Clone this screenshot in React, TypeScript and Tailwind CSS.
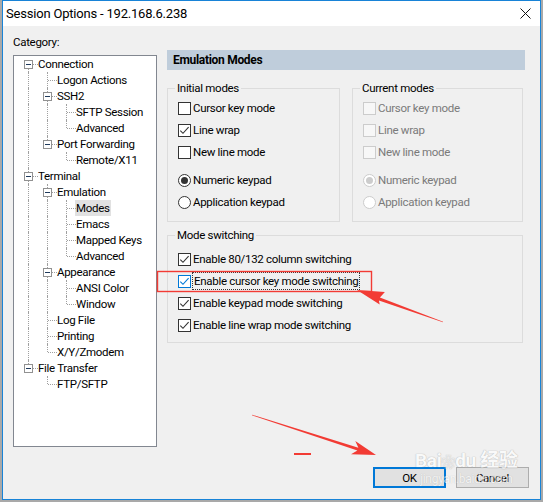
import React from 'react';

const UI = "font-['Roboto','Liberation_Sans',sans-serif]";

type TreeRow = {
  text: string;
  depth: number;
  guides: boolean[];
  last: boolean;
  first?: boolean;
  exp?: boolean;
  selected?: boolean;
};

const tree: TreeRow[] = [
  { text: 'Connection', depth: 0, guides: [], last: false, first: true, exp: true },
  { text: 'Logon Actions', depth: 1, guides: [true], last: false },
  { text: 'SSH2', depth: 1, guides: [true], last: false, exp: true },
  { text: 'SFTP Session', depth: 2, guides: [true, true], last: false },
  { text: 'Advanced', depth: 2, guides: [true, true], last: true },
  { text: 'Port Forwarding', depth: 1, guides: [true], last: true, exp: true },
  { text: 'Remote/X11', depth: 2, guides: [true, false], last: true },
  { text: 'Terminal', depth: 0, guides: [], last: false, exp: true },
  { text: 'Emulation', depth: 1, guides: [true], last: false, exp: true },
  { text: 'Modes', depth: 2, guides: [true, true], last: false, selected: true },
  { text: 'Emacs', depth: 2, guides: [true, true], last: false },
  { text: 'Mapped Keys', depth: 2, guides: [true, true], last: false },
  { text: 'Advanced', depth: 2, guides: [true, true], last: true },
  { text: 'Appearance', depth: 1, guides: [true], last: false, exp: true },
  { text: 'ANSI Color', depth: 2, guides: [true, true], last: false },
  { text: 'Window', depth: 2, guides: [true, true], last: true },
  { text: 'Log File', depth: 1, guides: [true], last: false },
  { text: 'Printing', depth: 1, guides: [true], last: false },
  { text: 'X/Y/Zmodem', depth: 1, guides: [true], last: true },
  { text: 'File Transfer', depth: 0, guides: [], last: true, exp: true },
  { text: 'FTP/SFTP', depth: 1, guides: [false], last: true },
];

const dot = 'border-dotted border-[#a0a0a0]';

function GuideCell({ on }: { on: boolean }) {
  return (
    <span className="relative w-[19px] h-[16px] shrink-0">
      {on && <span className={`absolute left-[9px] top-0 bottom-0 border-l ${dot}`} />}
    </span>
  );
}

function NodeCell({ row }: { row: TreeRow }) {
  return (
    <span className="relative w-[19px] h-[16px] shrink-0">
      <span
        className={`absolute left-[9px] border-l ${dot} ${row.first ? 'top-[8px]' : 'top-0'} ${
          row.last ? 'h-[8px]' : 'bottom-0'
        }`}
      />
      <span className={`absolute left-[10px] right-0 top-[8px] border-t ${dot}`} />
      {row.exp && (
        <span className="absolute left-[5px] top-[4px] w-[9px] h-[9px] border border-[#919191] bg-white flex items-center justify-center">
          <span className="w-[5px] h-px bg-[#1f3a5c]" />
        </span>
      )}
    </span>
  );
}

function Tree() {
  return (
    <div className="w-[144px] h-[392px] border border-[#828790] bg-white pl-[5px] leading-[16px] text-black">
      {tree.map((r, i) => (
        <div key={i} className="flex h-[16px] items-center">
          {r.guides.map((g, j) => (
            <GuideCell key={j} on={g} />
          ))}
          <NodeCell row={r} />
          <span className={`whitespace-nowrap px-[1px] -ml-[1px] ${r.selected ? 'bg-[#e1e1e1]' : ''}`}>{r.text}</span>
        </div>
      ))}
    </div>
  );
}

function Check({ checked, disabled, focus }: { checked?: boolean; disabled?: boolean; focus?: boolean }) {
  const border = disabled ? 'border-[#cccccc]' : focus ? 'border-[#0078d7]' : 'border-[#333333]';
  const stroke = focus ? '#0078d7' : '#333333';
  return (
    <span className={`w-[13px] h-[13px] border ${border} ${disabled ? 'bg-[#f7f7f7]' : 'bg-white'} flex items-center justify-center shrink-0`}>
      {checked && (
        <svg width="11" height="11" viewBox="0 0 11 11">
          <path d="M1.3 5.6 L4 8.3 L9.6 2.2" fill="none" stroke={stroke} strokeWidth="1.1" />
        </svg>
      )}
    </span>
  );
}

function Radio({ on, disabled }: { on?: boolean; disabled?: boolean }) {
  return (
    <span
      className={`w-[13px] h-[13px] rounded-full border ${disabled ? 'border-[#cccccc]' : 'border-[#333333]'} bg-white flex items-center justify-center shrink-0`}
    >
      {on && <span className={`w-[7px] h-[7px] rounded-full ${disabled ? 'bg-[#cccccc]' : 'bg-[#333333]'}`} />}
    </span>
  );
}

function Item({ children, label, disabled, focus }: { children: React.ReactNode; label: string; disabled?: boolean; focus?: boolean }) {
  return (
    <div className="flex items-center h-[22px] gap-[1px]">
      {children}
      <span
        className={`whitespace-nowrap px-[1px] leading-[16px] ${disabled ? 'text-[#7a7a7a]' : 'text-black'} ${
          focus ? 'border border-dotted border-[#333]' : ''
        }`}
      >
        {label}
      </span>
    </div>
  );
}

function Group({ title, className, children }: { title: string; className: string; children: React.ReactNode }) {
  return (
    <div className={`relative border border-[#dcdcdc] pl-[10px] ${className}`}>
      <span className="absolute left-[7px] -top-[9px] bg-[#f0f0f0] px-[2px] leading-[16px]">{title}</span>
      {children}
    </div>
  );
}

export default function App() {
  return (
    <div className={`relative w-[543px] h-[502px] bg-[#a9a9a9] pl-[2px] ${UI} text-[11.5px] tracking-[-0.3px] text-black overflow-hidden`}>
      <div className="w-[539px] h-[500px] border border-[#1883d7] flex flex-col bg-[#f0f0f0]">
        {/* title bar */}
        <div className="h-[25px] bg-white flex items-center justify-between pl-[3px] pr-[9px] shrink-0">
          <span className="text-[13px] leading-[20px] tracking-[-0.2px]">Session Options - 192.168.6.238</span>
          <svg width="11" height="11" viewBox="0 0 11 11">
            <path d="M0.5 0.5 L10.5 10.5 M10.5 0.5 L0.5 10.5" stroke="#111" strokeWidth="1" />
          </svg>
        </div>

        {/* body */}
        <div className="relative flex-1 flex pl-[10px]">
          <div className="flex flex-col pt-[8px]">
            <span className="leading-[16px]">Category:</span>
            <div className="mt-[5px]">
              <Tree />
            </div>
          </div>

          <div className="ml-[10px] mt-[24px] w-[358px] flex flex-col">
            <div className="h-[20px] bg-[#bfcddb] flex items-center pl-[6px] font-bold text-[12px]">Emulation Modes</div>

            <div className="flex gap-[12px] mt-[18px]">
              <Group title="Initial modes" className="w-[173px] h-[134px] pt-[8px]">
                <Item label="Cursor key mode"><Check /></Item>
                <Item label="Line wrap"><Check checked /></Item>
                <Item label="New line mode"><Check /></Item>
                <div className="h-[6px]" />
                <Item label="Numeric keypad"><Radio on /></Item>
                <Item label="Application keypad"><Radio /></Item>
              </Group>
              <Group title="Current modes" className="w-[171px] h-[134px] pt-[8px]">
                <Item label="Cursor key mode" disabled><Check disabled /></Item>
                <Item label="Line wrap" disabled><Check disabled /></Item>
                <Item label="New line mode" disabled><Check disabled /></Item>
                <div className="h-[6px]" />
                <Item label="Numeric keypad" disabled><Radio on disabled /></Item>
                <Item label="Application keypad" disabled><Radio disabled /></Item>
              </Group>
            </div>

            <Group title="Mode switching" className="w-[356px] h-[108px] mt-[13px] pt-[12px]">
              <Item label="Enable 80/132 column switching"><Check checked /></Item>
              <Item label="Enable cursor key mode switching" focus><Check checked focus /></Item>
              <Item label="Enable keypad mode switching"><Check checked /></Item>
              <Item label="Enable line wrap mode switching"><Check checked /></Item>
            </Group>
          </div>

          {/* buttons */}
          <div className="absolute right-[11px] bottom-[11px] flex gap-[10px]">
            <button className="w-[73px] h-[21px] border-2 border-[#0078d7] bg-[#e1e1e1] leading-[16px]">OK</button>
            <button className="w-[73px] h-[21px] border border-[#adadad] bg-[#e1e1e1] leading-[16px]">Cancel</button>
          </div>

          {/* watermark */}
          <div className="absolute left-[412px] top-[425px] flex flex-col items-center pointer-events-none opacity-60">
            <span className="text-[19px] font-bold leading-[20px] text-white [text-shadow:0_0_1px_#9a9a9a,0_0_1px_#9a9a9a] font-['Roboto','Noto_Sans_CJK_SC',sans-serif]">
              Bai<span className="text-[14px]">❀</span>du 经验
            </span>
            <span className="text-[12px] leading-[14px] text-white [text-shadow:0_0_1px_#9a9a9a]">jingyan.baidu.com</span>
          </div>
        </div>
      </div>

      {/* red annotations */}
      <svg className="absolute left-0 top-0 pointer-events-none" width="543" height="502" viewBox="0 0 543 502">
        <rect x="157.5" y="271.5" width="214" height="20" fill="none" stroke="#f23b34" strokeWidth="1.4" />
        <polygon
          points="443.1,321.7 442.9,322.3 378.9,300.4 379.7,304.6 357,290 384.9,292.1 379.9,297.6"
          fill="#f23b34"
        />
        <polygon
          points="251.9,415.3 252.1,414.7 358.4,447.8 355.3,440.9 376,455 351,454.3 357.4,450.6"
          fill="#f23b34"
        />
        <rect x="294" y="453" width="17" height="2" fill="#f23b34" />
      </svg>
    </div>
  );
}
